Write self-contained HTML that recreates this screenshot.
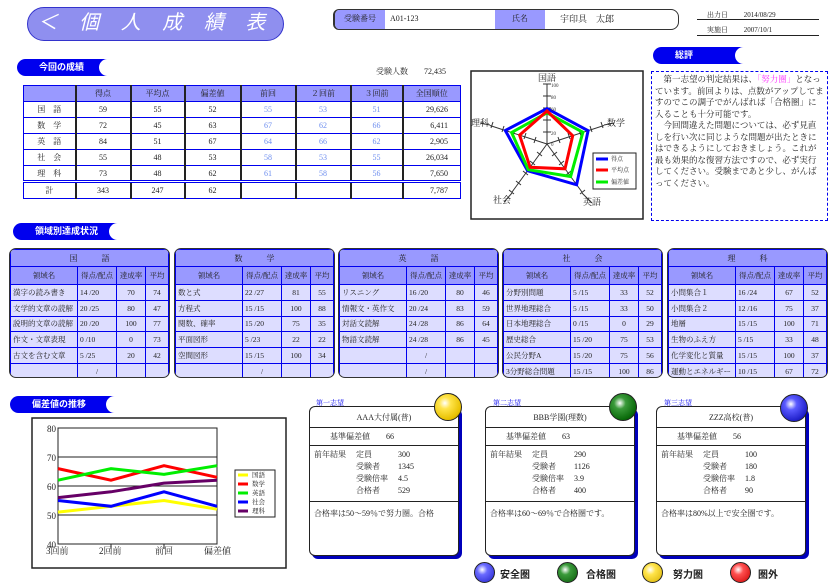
<!DOCTYPE html>
<html><head><meta charset="utf-8"><style>
*{margin:0;padding:0;box-sizing:border-box}
body{width:838px;height:588px;background:#fff;position:relative;overflow:hidden;font-family:"Liberation Serif","Noto Serif CJK JP",serif;font-size:8px;color:#222}
.a{position:absolute}
.tab{position:absolute;height:17px;background:#0000ee;color:#fff;font-family:"Liberation Sans","Noto Sans CJK JP",sans-serif;font-weight:bold;font-size:9px;line-height:17px;padding-left:22px;border-radius:9px 0 0 9px}
.tab:after{content:"";position:absolute;right:-1px;top:0;width:12px;height:17px;background:#fff;border-radius:9px 0 0 9px}
table{border-collapse:collapse}
.m td{border:1px solid #0000ee;text-align:center;height:16px;font-size:8px}
.m td.k{border-left:2px solid #222}
.pn{position:absolute;top:248px;height:130px;border:1.5px solid #333;border-radius:7px;overflow:hidden;background:#ddddff}
.pn table{width:100%}
.pn td{border:1px solid #0000ee;height:15.8px;font-size:7.5px;padding-left:2px;white-space:nowrap}
.pn tr.h td{background:#9999ff;text-align:center;padding:0;height:17px;font-size:8px}
.pn tr.c td{background:#9999ff;text-align:center;padding:0;height:18px;font-size:7.5px}
.pn td.n{text-align:center;padding:0}
.card{position:absolute;top:406px;width:150px;height:150px;border:1px solid #222;border-radius:6px;box-shadow:3px 3px 0 #0000bb;background:#fff;font-size:8px}
.card .t{height:21px;border-bottom:1px solid #222;text-align:center;line-height:21px}
.card .b{height:18px;border-bottom:1px solid #222;line-height:18px;padding-left:20px}
.card .r{height:56px;border-bottom:1px solid #222;padding:3px 0 0 4px;position:relative;line-height:12px}
.card .x{padding:6px 4px;line-height:12px}
.lbl{position:absolute;top:398px;font-size:7px;color:#0000ee}
.ball{position:absolute;border-radius:50%;border:1px solid #222}
</style></head><body>

<div class="a" style="left:27px;top:7px;width:257px;height:34px;border:1.5px solid #3333cc;border-radius:17px;background:#8f8fef;color:#fff;font-family:'Liberation Sans','Noto Sans CJK JP',sans-serif;font-size:20px;font-style:italic;text-align:center;line-height:31px;letter-spacing:8px">＜ 個 人 成 績 表 ＞</div>

<div class="a" style="left:333px;top:9px;width:346px;height:21px;border:1.5px solid #333;border-left-width:2px;border-radius:6px 8px 8px 6px;overflow:hidden;font-size:8px;line-height:18px">
 <div class="a" style="left:0;top:0;width:50px;height:19px;background:#9999ff;text-align:center">受験番号</div>
 <div class="a" style="left:55px;top:0">A01-123</div>
 <div class="a" style="left:160px;top:0;width:50px;height:19px;background:#9999ff;text-align:center">氏名</div>
 <div class="a" style="left:225px;top:0;font-size:9px">宇印具　太郎</div>
</div>
<div class="a" style="left:697px;top:10px;width:122px;border-bottom:1px solid #222;font-size:7px;padding-left:10px;height:10px">出力日 <span style="margin-left:14px">2014/08/29</span></div>
<div class="a" style="left:697px;top:25px;width:122px;border-bottom:1px solid #222;font-size:7px;padding-left:10px;height:11px">実施日 <span style="margin-left:14px">2007/10/1</span></div>

<div class="tab" style="left:17px;top:59px;width:93px">今回の成績</div>
<div class="a" style="left:376px;top:66px;font-size:8px">受験人数　　72,435</div>
<table class="m a" style="left:23px;top:85px;width:438px;border:1.5px solid #0000ee">
<tr style="background:#9999ff"><td style="width:52px"></td><td class="k" style="width:55px">得点</td><td class="k" style="width:54px">平均点</td><td class="k" style="width:56px">偏差値</td><td class="k" style="width:55px">前回</td><td class="k" style="width:55px">２回前</td><td class="k" style="width:52px">３回前</td><td class="k">全国順位</td></tr>
<tr><td>国　語</td><td class="k">59</td><td class="k">55</td><td class="k">52</td><td class="k" style="color:#6f8fef">55</td><td class="k" style="color:#6f8fef">53</td><td class="k" style="color:#6f8fef">51</td><td class="k" style="text-align:right;padding-right:12px">29,626</td></tr>
<tr><td>数　学</td><td class="k">72</td><td class="k">45</td><td class="k">63</td><td class="k" style="color:#6f8fef">67</td><td class="k" style="color:#6f8fef">62</td><td class="k" style="color:#6f8fef">66</td><td class="k" style="text-align:right;padding-right:12px">6,411</td></tr>
<tr><td>英　語</td><td class="k">84</td><td class="k">51</td><td class="k">67</td><td class="k" style="color:#6f8fef">64</td><td class="k" style="color:#6f8fef">66</td><td class="k" style="color:#6f8fef">62</td><td class="k" style="text-align:right;padding-right:12px">2,905</td></tr>
<tr><td>社　会</td><td class="k">55</td><td class="k">48</td><td class="k">53</td><td class="k" style="color:#6f8fef">58</td><td class="k" style="color:#6f8fef">53</td><td class="k" style="color:#6f8fef">55</td><td class="k" style="text-align:right;padding-right:12px">26,034</td></tr>
<tr><td>理　科</td><td class="k">73</td><td class="k">48</td><td class="k">62</td><td class="k" style="color:#6f8fef">61</td><td class="k" style="color:#6f8fef">58</td><td class="k" style="color:#6f8fef">56</td><td class="k" style="text-align:right;padding-right:12px">7,650</td></tr>
<tr style="border-top:3px double #0000ee"><td style="height:17px">計</td><td class="k">343</td><td class="k">247</td><td class="k">62</td><td class="k"></td><td class="k"></td><td class="k"></td><td class="k" style="text-align:right;padding-right:12px">7,787</td></tr>
</table>

<svg class="a" style="left:0;top:0" width="838" height="588">
<rect x="471" y="71" width="172" height="148" fill="#fff" stroke="#222" stroke-width="1.5"/>
<g stroke="#333" stroke-width="1" fill="none">
<line x1="547" y1="144" x2="547" y2="84"/><line x1="547" y1="144" x2="604" y2="125.5"/><line x1="547" y1="144" x2="582.3" y2="192.5"/><line x1="547" y1="144" x2="511.7" y2="192.5"/><line x1="547" y1="144" x2="489.9" y2="125.5"/>
<path d="M543 84h8M543 96h8M543 108h8M543 120h8M543 132h8"/>
<path d="M601 122l2 6M590 126l2 6M579 130l2 6M568 133l2 6M558 137l2 6"/>
<path d="M493 122l-2 6M504 126l-2 6M515 130l-2 6M526 133l-2 6M536 137l-2 6"/>
<path d="M585 190l-5 4M578 181l-5 4M571 171l-5 4M564 161l-5 4M557 152l-5 4"/>
<path d="M509 190l5 4M516 181l5 4M523 171l5 4M530 161l5 4M537 152l5 4"/>
<path d="M582 193l10 10M512 193l-8 9M490 125l-10 -2M604 125l10 -2"/>
</g>
<polygon points="547,108.6 588.1,130.7 576.6,184.8 527.6,170.7 505.3,130.5" fill="none" stroke="#0000ff" stroke-width="3"/>
<polygon points="547,112.8 582.9,132.3 570.6,176.5 528.3,169.7 511.6,132.5" fill="none" stroke="#00ee00" stroke-width="3"/>
<polygon points="547,111 572.7,135.7 565,168.8 530.1,167.3 519.6,135.1" fill="none" stroke="#ff0000" stroke-width="3"/>
<g font-size="9" fill="#222" font-family="Liberation Serif,Noto Serif CJK JP,serif">
<text x="538" y="81">国語</text><text x="607" y="126">数学</text><text x="583" y="205">英語</text><text x="493" y="203">社会</text><text x="471" y="126">理科</text></g>
<g font-size="5" fill="#333"><text x="551" y="87">100</text><text x="551" y="99">80</text><text x="551" y="111">60</text><text x="551" y="135">20</text><text x="551" y="146">0</text></g>
<rect x="593" y="153" width="43" height="36" fill="#fff" stroke="#222"/>
<g stroke-width="3"><line x1="596" y1="159" x2="608" y2="159" stroke="#0000ff"/><line x1="596" y1="170" x2="608" y2="170" stroke="#ff0000"/><line x1="596" y1="182" x2="608" y2="182" stroke="#00ee00"/></g>
<g font-size="6" fill="#222"><text x="611" y="161">得点</text><text x="611" y="172">平均点</text><text x="611" y="184">偏差値</text></g>

<rect x="32" y="418" width="254" height="150" fill="#fff" stroke="#222" stroke-width="1.5"/>
<rect x="58" y="428" width="159" height="116" fill="#fff" stroke="#222" stroke-width="1"/>
<g stroke="#222"><line x1="58" y1="457" x2="217" y2="457"/><line x1="58" y1="486" x2="217" y2="486"/><line x1="58" y1="515" x2="217" y2="515"/><path d="M111 544v5M164 544v5"/></g>
<g fill="none" stroke-width="3">
<polyline points="58,512.1 111,506.3 164,500.5 217,509.2" stroke="#ffff00"/>
<polyline points="58,468.6 111,480.2 164,465.7 217,477.3" stroke="#ff0000"/>
<polyline points="58,480.2 111,468.6 164,474.4 217,465.7" stroke="#00ee00"/>
<polyline points="58,500.5 111,506.3 164,491.8 217,506.3" stroke="#0000ff"/>
<polyline points="58,497.6 111,491.8 164,483.1 217,480.2" stroke="#660066"/>
</g>
<g font-size="9" fill="#222"><text x="47" y="432">80</text><text x="47" y="461">70</text><text x="47" y="490">60</text><text x="47" y="519">50</text><text x="47" y="548">40</text>
<text x="46" y="554">3回前</text><text x="99" y="554">2回前</text><text x="155" y="554">前回</text><text x="204" y="554">偏差値</text></g>
<rect x="235" y="470" width="40" height="47" fill="#fff" stroke="#222"/>
<g stroke-width="3"><line x1="238" y1="475" x2="248" y2="475" stroke="#ffff00"/><line x1="238" y1="484" x2="248" y2="484" stroke="#ff0000"/><line x1="238" y1="493" x2="248" y2="493" stroke="#00ee00"/><line x1="238" y1="502" x2="248" y2="502" stroke="#0000ff"/><line x1="238" y1="511" x2="248" y2="511" stroke="#660066"/></g>
<g font-size="6.5" fill="#222"><text x="252" y="477">国語</text><text x="252" y="486">数学</text><text x="252" y="495">英語</text><text x="252" y="504">社会</text><text x="252" y="513">理科</text></g>
</svg>

<div class="tab" style="left:653px;top:47px;width:93px">総評</div>
<div class="a" style="left:651px;top:71px;width:177px;height:150px;border:1.5px dashed #0000ee;padding:2px 3px;font-size:8.5px;line-height:11.5px;font-family:'Liberation Serif','Noto Serif CJK JP',serif">　第一志望の判定結果は、<span style="color:#ff33ff">「努力圏」</span>となっています。前回よりは、点数がアップしてますのでこの調子でがんばれば「合格圏」に入ることも十分可能です。<br>　今回間違えた問題については、必ず見直しを行い次に同じような問題が出たときにはできるようにしておきましょう。これが最も効果的な復習方法ですので、必ず実行してください。受験まであと少し、がんばってください。</div>

<div class="tab" style="left:13px;top:223px;width:107px">領域別達成状況</div>

<div class="pn" style="left:9px;width:161px"><table>
<tr class="h"><td colspan="4">国　　　語</td></tr>
<tr class="c"><td style="width:67px">領域名</td><td style="width:39px">得点/配点</td><td style="width:29px">達成率</td><td>平均</td></tr>
<tr><td>漢字の読み書き</td><td>14 /20</td><td class="n">70</td><td class="n">74</td></tr>
<tr><td>文学的文章の読解</td><td>20 /25</td><td class="n">80</td><td class="n">47</td></tr>
<tr><td>説明的文章の読解</td><td>20 /20</td><td class="n">100</td><td class="n">77</td></tr>
<tr><td>作文・文章表現</td><td>0 /10</td><td class="n">0</td><td class="n">73</td></tr>
<tr><td>古文を含む文章</td><td>5 /25</td><td class="n">20</td><td class="n">42</td></tr>
<tr><td></td><td class="n">/</td><td></td><td></td></tr></table></div>

<div class="pn" style="left:174px;width:161px"><table>
<tr class="h"><td colspan="4">数　　　学</td></tr>
<tr class="c"><td style="width:67px">領域名</td><td style="width:39px">得点/配点</td><td style="width:29px">達成率</td><td>平均</td></tr>
<tr><td>数と式</td><td>22 /27</td><td class="n">81</td><td class="n">55</td></tr>
<tr><td>方程式</td><td>15 /15</td><td class="n">100</td><td class="n">88</td></tr>
<tr><td>関数、確率</td><td>15 /20</td><td class="n">75</td><td class="n">35</td></tr>
<tr><td>平面図形</td><td>5 /23</td><td class="n">22</td><td class="n">22</td></tr>
<tr><td>空間図形</td><td>15 /15</td><td class="n">100</td><td class="n">34</td></tr>
<tr><td></td><td class="n">/</td><td></td><td></td></tr></table></div>

<div class="pn" style="left:338px;width:161px"><table>
<tr class="h"><td colspan="4">英　　　語</td></tr>
<tr class="c"><td style="width:67px">領域名</td><td style="width:39px">得点/配点</td><td style="width:29px">達成率</td><td>平均</td></tr>
<tr><td>リスニング</td><td>16 /20</td><td class="n">80</td><td class="n">46</td></tr>
<tr><td>情報文・英作文</td><td>20 /24</td><td class="n">83</td><td class="n">59</td></tr>
<tr><td>対話文読解</td><td>24 /28</td><td class="n">86</td><td class="n">64</td></tr>
<tr><td>物語文読解</td><td>24 /28</td><td class="n">86</td><td class="n">45</td></tr>
<tr><td></td><td class="n">/</td><td></td><td></td></tr>
<tr><td></td><td class="n">/</td><td></td><td></td></tr></table></div>

<div class="pn" style="left:502px;width:161px"><table>
<tr class="h"><td colspan="4">社　　　会</td></tr>
<tr class="c"><td style="width:67px">領域名</td><td style="width:39px">得点/配点</td><td style="width:29px">達成率</td><td>平均</td></tr>
<tr><td>分野別問題</td><td>5 /15</td><td class="n">33</td><td class="n">52</td></tr>
<tr><td>世界地理総合</td><td>5 /15</td><td class="n">33</td><td class="n">50</td></tr>
<tr><td>日本地理総合</td><td>0 /15</td><td class="n">0</td><td class="n">29</td></tr>
<tr><td>歴史総合</td><td>15 /20</td><td class="n">75</td><td class="n">53</td></tr>
<tr><td>公民分野A</td><td>15 /20</td><td class="n">75</td><td class="n">56</td></tr>
<tr><td>3分野総合問題</td><td>15 /15</td><td class="n">100</td><td class="n">86</td></tr></table></div>

<div class="pn" style="left:667px;width:161px"><table>
<tr class="h"><td colspan="4">理　　　科</td></tr>
<tr class="c"><td style="width:67px">領域名</td><td style="width:39px">得点/配点</td><td style="width:29px">達成率</td><td>平均</td></tr>
<tr><td>小問集合１</td><td>16 /24</td><td class="n">67</td><td class="n">52</td></tr>
<tr><td>小問集合２</td><td>12 /16</td><td class="n">75</td><td class="n">37</td></tr>
<tr><td>地層</td><td>15 /15</td><td class="n">100</td><td class="n">71</td></tr>
<tr><td>生物のふえ方</td><td>5 /15</td><td class="n">33</td><td class="n">48</td></tr>
<tr><td>化学変化と質量</td><td>15 /15</td><td class="n">100</td><td class="n">37</td></tr>
<tr><td>運動とエネルギー</td><td>10 /15</td><td class="n">67</td><td class="n">72</td></tr></table></div>

<div class="tab" style="left:10px;top:396px;width:107px">偏差値の推移</div>

<div class="lbl" style="left:316px">第一志望</div>
<div class="card" style="left:309px"><div class="t">AAA大付属(普)</div><div class="b">基準偏差値　　66</div>
<div class="r">前年結果<div class="a" style="left:46px;top:3px">定員<br>受験者<br>受験倍率<br>合格者</div><div class="a" style="left:88px;top:3px">300<br>1345<br>4.5<br>529</div></div>
<div class="x" style="white-space:nowrap;overflow:hidden">合格率は50～59％で努力圏。合格</div></div>
<div class="ball" style="left:434px;top:393px;width:28px;height:28px;background:radial-gradient(circle at 38% 35%,#fff 0,#ffe44a 25%,#e8c000 70%,#a88a00 100%)"></div>

<div class="lbl" style="left:493px">第二志望</div>
<div class="card" style="left:485px"><div class="t">BBB学園(理数)</div><div class="b">基準偏差値　　63</div>
<div class="r">前年結果<div class="a" style="left:46px;top:3px">定員<br>受験者<br>受験倍率<br>合格者</div><div class="a" style="left:88px;top:3px">290<br>1126<br>3.9<br>400</div></div>
<div class="x">合格率は60～69％で合格圏です。</div></div>
<div class="ball" style="left:609px;top:393px;width:28px;height:28px;background:radial-gradient(circle at 38% 35%,#fff 0,#3a9a3a 25%,#0a6a0a 70%,#033a03 100%)"></div>

<div class="lbl" style="left:664px">第三志望</div>
<div class="card" style="left:656px"><div class="t">ZZZ高校(普)</div><div class="b">基準偏差値　　56</div>
<div class="r">前年結果<div class="a" style="left:46px;top:3px">定員<br>受験者<br>受験倍率<br>合格者</div><div class="a" style="left:88px;top:3px">100<br>180<br>1.8<br>90</div></div>
<div class="x">合格率は80%以上で安全圏です。</div></div>
<div class="ball" style="left:780px;top:394px;width:28px;height:28px;background:radial-gradient(circle at 38% 35%,#fff 0,#5a5aff 25%,#2222cc 70%,#000088 100%)"></div>

<div class="ball" style="left:474px;top:562px;width:21px;height:21px;background:radial-gradient(circle at 38% 35%,#fff 0,#6a6aff 30%,#2222cc 100%)"></div>
<div class="a" style="left:500px;top:566px;font-size:10px;font-family:'Liberation Sans','Noto Sans CJK JP',sans-serif;font-weight:bold">安全圏</div>
<div class="ball" style="left:557px;top:562px;width:21px;height:21px;background:radial-gradient(circle at 38% 35%,#fff 0,#3a9a3a 30%,#0a5a0a 100%)"></div>
<div class="a" style="left:586px;top:566px;font-size:10px;font-family:'Liberation Sans','Noto Sans CJK JP',sans-serif;font-weight:bold">合格圏</div>
<div class="ball" style="left:642px;top:562px;width:21px;height:21px;background:radial-gradient(circle at 38% 35%,#fff 0,#ffe44a 30%,#d8b000 100%)"></div>
<div class="a" style="left:673px;top:566px;font-size:10px;font-family:'Liberation Sans','Noto Sans CJK JP',sans-serif;font-weight:bold">努力圏</div>
<div class="ball" style="left:730px;top:562px;width:21px;height:21px;background:radial-gradient(circle at 38% 35%,#fff 0,#ff5050 30%,#cc0000 100%)"></div>
<div class="a" style="left:758px;top:566px;font-size:10px;font-family:'Liberation Sans','Noto Sans CJK JP',sans-serif;font-weight:bold">圏外</div>

</body></html>
